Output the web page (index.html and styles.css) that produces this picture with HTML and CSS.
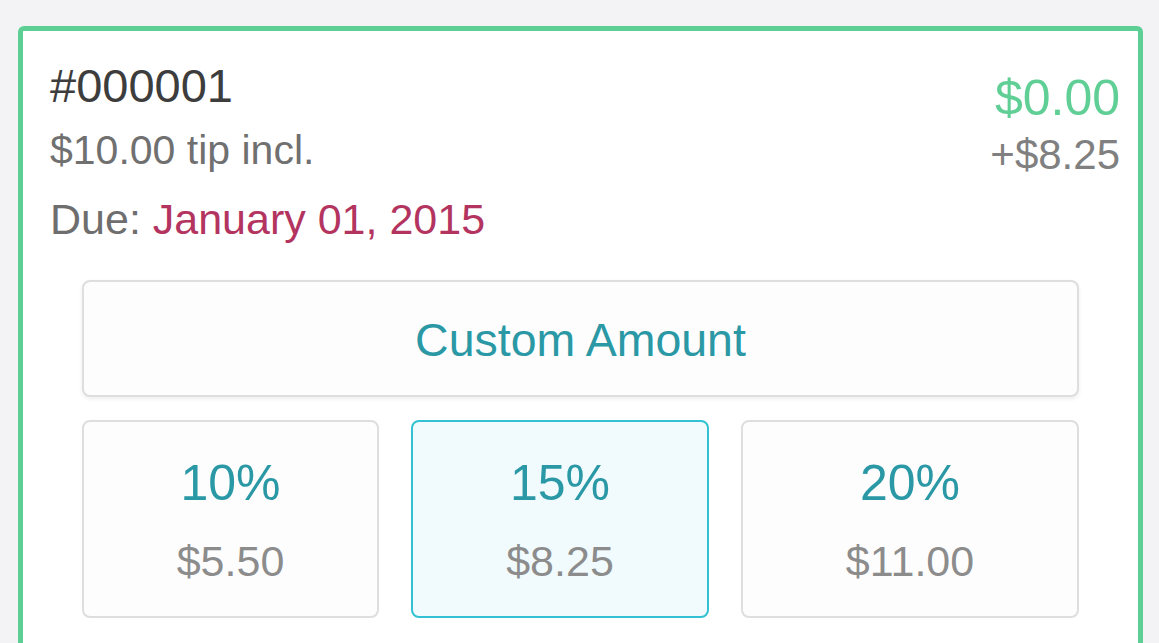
FILE: index.html
```html
<!DOCTYPE html>
<html lang="en">
<head>
    <meta charset="UTF-8">
    <meta name="viewport" content="width=device-width, initial-scale=1.0">
    <title>Invoice Tip</title>
    <link rel="stylesheet" href="styles.css">
</head>
<body>
    <div class="card">
        <div class="header">
            <div class="info">
                <div class="number">#000001</div>
                <div class="tip-incl">$10.00 tip incl.</div>
                <div class="due">Due: <span class="date">January 01, 2015</span></div>
            </div>
            <div class="totals">
                <div class="balance">$0.00</div>
                <div class="added">+$8.25</div>
            </div>
        </div>

        <div class="tips">
            <button class="custom">Custom Amount</button>
            <div class="options">
                <button class="option">
                    <span class="pct">10%</span>
                    <span class="amt">$5.50</span>
                </button>
                <button class="option selected">
                    <span class="pct">15%</span>
                    <span class="amt">$8.25</span>
                </button>
                <button class="option">
                    <span class="pct">20%</span>
                    <span class="amt">$11.00</span>
                </button>
            </div>
        </div>
    </div>
</body>
</html>
```

FILE: styles.css
```css
html, body {
    height: 100%;
    overflow: hidden;
}
body {
    margin: 0;
    padding: 26px 16px 0 18px;
    background: #f3f3f5;
    font-family: "Liberation Sans", Arial, sans-serif;
    box-sizing: border-box;
}
.card {
    width: 1125px;
    box-sizing: border-box;
    background: #fff;
    border: 5px solid #5dcf95;
    border-bottom: none;
    border-radius: 6px 6px 0 0;
    padding: 25px 18px 60px 27px;
}
.header {
    display: flex;
    justify-content: space-between;
    align-items: flex-start;
}
.number {
    font-size: 47px;
    line-height: 60px;
    color: #3d3d3d;
}
.tip-incl {
    font-size: 41px;
    line-height: 68px;
    color: #707070;
}
.due {
    font-size: 43px;
    line-height: 70px;
    color: #6e6e6e;
}
.date {
    color: #b3345f;
}
.totals {
    padding-top: 14px;
    text-align: right;
}
.balance {
    font-size: 50px;
    line-height: 56px;
    color: #5fcf96;
}
.added {
    font-size: 42px;
    line-height: 58px;
    color: #808080;
}
.tips {
    margin: 26px 41px 0 32px;
}
button {
    font-family: inherit;
    cursor: pointer;
    box-sizing: border-box;
}
.custom {
    display: block;
    width: 100%;
    height: 117px;
    background: #fdfdfd;
    border: 2px solid #dedede;
    border-radius: 8px;
    box-shadow: 0 2px 4px rgba(0, 0, 0, 0.07);
    color: #2a98a5;
    font-size: 46.5px;
    padding: 2px 0 0;
}
.options {
    display: grid;
    grid-template-columns: 297px 298px 1fr;
    gap: 32px;
    margin-top: 23px;
}
.option {
    display: flex;
    flex-direction: column;
    align-items: center;
    height: 198px;
    padding: 29px 0 0;
    background: #fdfdfd;
    border: 2px solid #dedede;
    border-radius: 8px;
}
.option.selected {
    background: #f1fbfe;
    border-color: #33c2d3;
}
.pct {
    font-size: 50px;
    line-height: 64px;
    color: #2a98a5;
}
.amt {
    margin-top: 18px;
    font-size: 43px;
    line-height: 56px;
    color: #8c8c8c;
}
```
